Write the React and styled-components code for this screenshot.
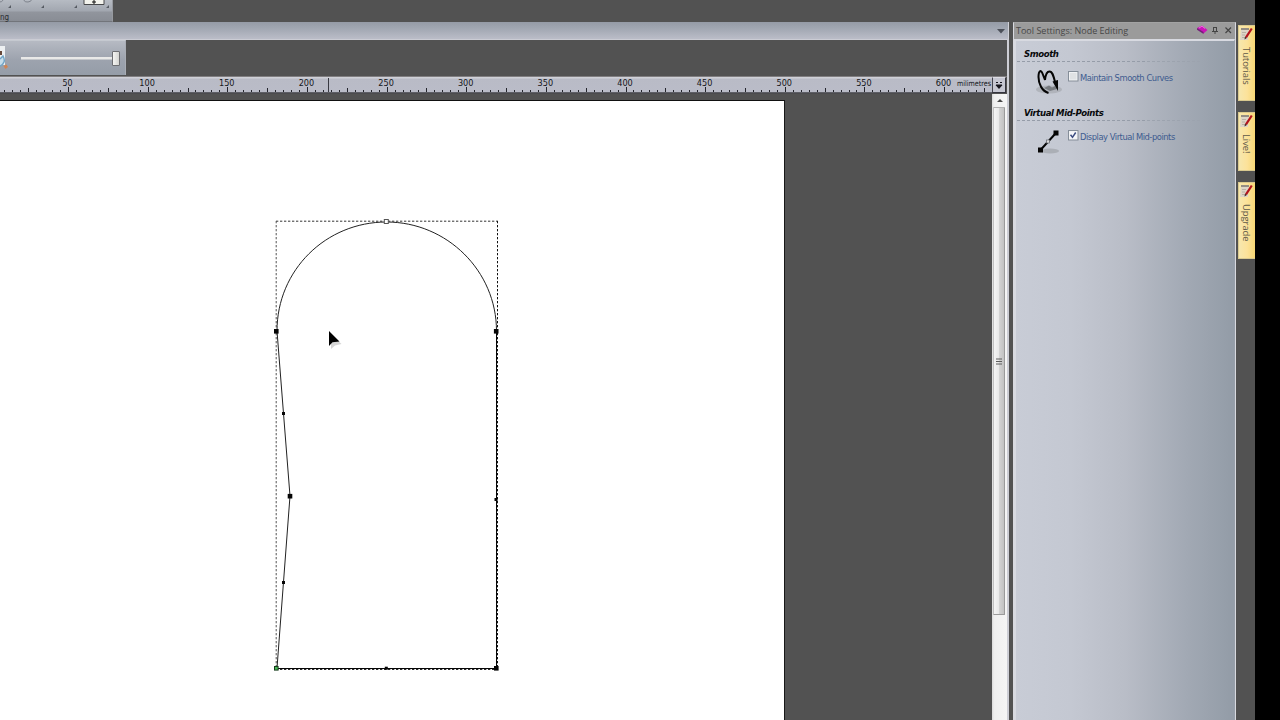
import React from 'react';
import styled, { createGlobalStyle } from 'styled-components';

const GlobalStyle = createGlobalStyle`
  *, *::before, *::after { box-sizing: border-box; }
  html, body { margin: 0; padding: 0; overflow: hidden; background: #000; }
  svg { display: block; flex-shrink: 0; }
`;

const ui = '"DejaVu Sans Condensed", "DejaVu Sans", sans-serif';

const Screen = styled.div`
  display: flex;
  width: 1280px;
  height: 720px;
  overflow: hidden;
  background: #000;
  font-family: ${ui};
`;

const Desktop = styled.div`
  display: flex;
  width: 1255px;
  background: #525252;
`;

const Workspace = styled.main`
  display: flex;
  flex-direction: column;
  width: 1009px;
`;

const RibbonGroup = styled.div`
  height: 22px;
  width: 113px;
  border-right: 1px solid #96999f;
  border-bottom: 1px solid #72757b;
  background: linear-gradient(#b6bbc3, #a2a7b0 11px, #91959d 12px, #898d95);
`;

const RibbonIcons = styled.svg`
  width: 112px;
  height: 12px;
`;

const RibbonCaption = styled.div`
  height: 9px;
  line-height: 11px;
  font-size: 8px;
  color: #292c31;
`;

const TabStrip = styled.div`
  display: flex;
  align-items: center;
  justify-content: flex-end;
  height: 18px;
  padding: 1px 3px 0 0;
  border-right: 1px solid #d0d1d8;
  border-bottom: 1px solid #cbccd4;
  background: linear-gradient(#959ba6, #a0a6b1 6px, #bbbdc8);
`;

const View = styled.div`
  display: flex;
  flex-direction: column;
  flex: 1;
  min-height: 0;
  border-right: 2px solid #cdced5;
`;

const SliderBar = styled.div`
  display: flex;
  align-items: center;
  width: 126px;
  height: 35px;
  border-top: 1px solid #c5c9d0;
  border-right: 1px solid #a9adb5;
  background: linear-gradient(#b6bac3, #9da3ae 55%, #959da8);
`;

const ClippedIcon = styled.svg`
  width: 8px;
  height: 26px;
`;

const SliderTrack = styled.div`
  width: 91px;
  height: 3px;
  margin: 1px 0 0 13px;
  background: #e9e9e8;
  border-bottom: 1px solid #c4c7cb;
`;

const SliderThumb = styled.div`
  width: 8px;
  height: 15px;
  border: 1px solid #6d6e72;
  border-radius: 1px;
  background: linear-gradient(90deg, #f5f5f3, #d5d5d2);
`;

const RulerRow = styled.div`
  display: flex;
  height: 18px;
  margin-top: 1px;
  border-top: 1px solid #807e80;
`;

const RulerScale = styled.svg`
  width: 992px;
  height: 17px;
  background: linear-gradient(#cfd0d7 0 1px, #b9bbc6 2px, #babcc8);
`;

const UnitButton = styled.div`
  display: flex;
  align-items: center;
  justify-content: center;
  width: 14px;
  height: 16px;
  border: 1px solid #34343e;
  border-top-color: #dcdce3;
  border-left-color: #44444e;
  background: #c5c6d1;
`;

const CanvasRow = styled.div`
  display: flex;
  flex: 1;
  min-height: 0;
`;

const Canvas = styled.div`
  width: 992px;
  padding-top: 6px;
  background: #525252;
`;

const Page = styled.div`
  width: 785px;
  height: 621px;
  border-top: 1px solid #111;
  border-right: 1px solid #181818;
  background: #fff;
`;

const Scrollbar = styled.div`
  display: flex;
  flex-direction: column;
  width: 15px;
  background: linear-gradient(90deg, #d9d9d9, #efefef 2px, #f5f5f5);
`;

const ScrollArrow = styled.div`
  display: flex;
  align-items: center;
  justify-content: center;
  height: 13px;
`;

const ScrollThumb = styled.div`
  display: flex;
  align-items: center;
  justify-content: center;
  width: 12px;
  height: 508px;
  margin-left: 1px;
  border: 1px solid #9a9a9a;
  border-top-color: #b0b0b0;
  border-left-color: #c0c0c0;
  border-radius: 1px;
  background: linear-gradient(90deg, #f4f4f4, #e9e9e9 45%, #d2d2d2 55%, #c2c2c2);
`;

const ToolPanel = styled.aside`
  display: flex;
  flex-direction: column;
  width: 223px;
  height: 698px;
  margin: 22px 0 0 4px;
  border: 1px solid #d8d9df;
  border-bottom: 0;
  border-top-color: #a3a3a3;
`;

const PanelTitle = styled.header`
  display: flex;
  align-items: center;
  justify-content: space-between;
  height: 16px;
  padding: 0 2px 2px 2px;
  background: #9b9b9b;
  font-family: "Open Sans", "Noto Sans", sans-serif;
  font-size: 9px;
  color: #474747;
  white-space: nowrap;
`;

const PanelBody = styled.div`
  flex: 1;
  border: 2px solid #d8dae1;
  border-width: 2px 1px 0 2px;
  border-right-color: #979fa9;
  padding: 5px 0 0 1px;
  background: linear-gradient(90deg, #c8ccd6, #c4c8d2 25%, #b9bdc7 50%, #a2a9b4 78%, #949da8 98%);
`;

const Section = styled.section`
  height: 59px;
`;

const SectionTitle = styled.h2`
  width: 184px;
  height: 15px;
  margin: 0;
  padding-left: 7px;
  font: italic bold 9.5px/15px ${ui};
  letter-spacing: -0.42px;
  color: #08090b;
  white-space: nowrap;
`;

const DividerLine = styled.svg`
  width: 184px;
  height: 1px;
`;

const OptionRow = styled.label`
  display: flex;
  padding: 5px 0 0 18px;
  font-size: 9.3px;
  line-height: 21px;
  letter-spacing: ${(p) => p.$tracking};
  color: #3d5b8f;
  white-space: nowrap;
`;

const OptionIcon = styled.svg`
  width: 33px;
  height: 32px;
`;

const Checkbox = styled.svg`
  width: 11px;
  height: 11px;
  margin: 4px 1px 0 0;
`;

const TabRail = styled.nav`
  display: flex;
  flex-direction: column;
  gap: 11px;
  width: 17px;
  margin: 25px 0 0 2px;
`;

const SideTab = styled.div`
  display: flex;
  flex-direction: column;
  align-items: flex-start;
  width: 17px;
  height: ${(p) => p.$length}px;
  padding: 1px 0 0 1px;
  border: 1px solid #d9c98f;
  border-right: 0;
  background: linear-gradient(90deg, #f6e7ae, #fce29a 50%, #f7d774);
`;

const SideTabLabel = styled.span`
  margin-top: 6px;
  writing-mode: vertical-rl;
  font-family: "Open Sans", "Noto Sans", sans-serif;
  font-size: 9.5px;
  line-height: 13px;
  letter-spacing: -0.1px;
  color: #5d5848;
`;

function Divider() {
  return (
    <DividerLine viewBox="0 0 184 1">
      <line x1="0" y1=".5" x2="130" y2=".5" stroke="#959ca8" strokeDasharray="3 2" />
      <line x1="130" y1=".5" x2="184" y2=".5" stroke="#9ca3ae" strokeDasharray="3 2" />
    </DividerLine>
  );
}

function Ruler() {
  const ticks = Array.from({ length: 126 }, (_, i) => ({
    x: Math.round(-11.6 + 7.964 * i),
    h: i % 10 === 0 ? 5 : i % 5 === 0 ? 4 : 2,
  }));
  const labels = Array.from({ length: 12 }, (_, i) => 50 * (i + 1));
  return (
    <RulerScale viewBox="0 0 992 17">
      {ticks.map((t) => (
        <rect key={t.x} x={t.x} y={15 - t.h} width="1" height={t.h} fill="#24252c" />
      ))}
      <rect y="15" width="992" height="1" fill="#5e5f66" />
      <rect y="16" width="992" height="1" fill="#4b4b4e" />
      <rect x="328" y="1" width="1" height="14" fill="#383941" />
      {labels.map((n) => (
        <text
          key={n}
          x={67.5 + (n / 50 - 1) * 79.64}
          y="9"
          textAnchor="middle"
          textLength={n < 100 ? 10 : 15.5}
          lengthAdjust="spacingAndGlyphs"
          fontSize="8.5"
          fill="#15161a"
        >
          {n}
        </text>
      ))}
      <text x="957" y="9" textLength="34" lengthAdjust="spacingAndGlyphs" fontSize="7.5" fill="#101116">
        milimetres
      </text>
    </RulerScale>
  );
}

function Node({ x, y, size = 4.6, fill = '#050505' }) {
  return <rect x={x - size / 2} y={y - size / 2} width={size} height={size} fill={fill} />;
}

function Drawing() {
  return (
    <svg width="784" height="619" viewBox="0 101 784 619">
      <g fill="none" strokeWidth="1" strokeDasharray="2.300 1.700">
        <path d="M276 221.200H498" stroke="#333" />
        <path d="M276.200 221V669" stroke="#555" />
        <path d="M497.500 221V669" stroke="#111" />
        <path d="M276 669.400H498" stroke="#111" />
      </g>
      <path d="M277 331C277 270 326 222 386.500 222S496.500 271 496.500 331" fill="none" stroke="#222" />
      <path d="M277 331L290 496L277 668" fill="none" stroke="#222" />
      <path d="M277 668.500H496.500V331" fill="none" stroke="#050505" />
      <rect x="384.300" y="219.500" width="4" height="4" fill="#fff" stroke="#555" />
      <Node x={276.3} y={331.3} />
      <Node x={496.2} y={331.3} />
      <Node x={290} y={496.2} />
      <Node x={283.5} y={413.5} size={3} />
      <Node x={283.5} y={582.5} size={3} />
      <Node x={496} y={499.5} size={3} />
      <Node x={386.3} y={668.2} size={3} />
      <Node x={496.3} y={668.3} />
      <Node x={276.3} y={668.3} fill="#173d1c" />
      <Node x={276.3} y={668.3} size={2.6} fill="#49b657" />
      <path d="M331 334V349L335 345.500L341.500 344Z" fill="#777" opacity=".3" />
      <path d="M329 331V346L332.500 342.200L339.500 341.400Z" fill="#000" />
    </svg>
  );
}

function CheckMark({ checked }) {
  return (
    <Checkbox viewBox="0 0 11 11">
      <rect x=".5" y=".5" width="9.500" height="9.500" fill="#f1f2f4" stroke="#858e99" />
      <rect x="2" y="2" width="6.500" height="6.500" fill={checked ? '#f6f7fa' : '#e0e2e4'} />
      {checked && <path d="M2.500 4.800L4.500 7.300L7.700 2.500" fill="none" stroke="#3c4d81" strokeWidth="1.500" />}
    </Checkbox>
  );
}

function PencilIcon() {
  return (
    <svg width="13" height="14" viewBox="0 0 13 14">
      <path d="M1 1.500H9L8 13H0Z" fill="#ddd5c7" />
      <path d="M1 1H9V3H1Z" fill="#948d83" />
      <path d="M2 5.500H6M2 8H5M2 10.500H6" stroke="#b9b1a6" />
      <path d="M11.800 1.500L6 10.300" stroke="#b4131d" strokeWidth="2.200" />
      <path d="M5 9.700L6.800 10.900L4.500 12.500Z" fill="#3b2420" />
    </svg>
  );
}

export default function App() {
  return (
    <>
      <GlobalStyle />
      <Screen>
        <Desktop>
          <Workspace>
            <RibbonGroup>
              <RibbonIcons viewBox="0 0 112 12">
                <path d="M-2 2Q2 3 4-1M23-1Q25 3 28 2Q31 2 32-1" fill="none" stroke="#7e838c" />
                <path d="M11 5V8H8ZM44 5V8H41ZM77 5V8H74ZM109 5V8H106Z" fill="#565b63" />
                <path d="M84-1V4.500H104V-1Z" fill="#f3f3ed" stroke="#48494b" />
                <path d="M94 0V4M92 2H96" stroke="#111" />
              </RibbonIcons>
              <RibbonCaption>ng</RibbonCaption>
            </RibbonGroup>
            <TabStrip>
              <svg width="8" height="5" viewBox="0 0 8 5"><path d="M0 0H8L4 4.500Z" fill="#4c5059" /></svg>
            </TabStrip>
            <View>
              <SliderBar>
                <ClippedIcon viewBox="0 0 8 26">
                  <path d="M0 1H5V20H0Z" fill="#edf0f2" />
                  <path d="M0 6H2V10H0Z" fill="#654738" />
                  <path d="M0 14L3 11Q5 15 4 17Q3 20 0 21" fill="#c5dcea" stroke="#71a5c7" strokeWidth="1.500" />
                  <path d="M3.500 21L6.500 19.500L8 22L5.500 24Z" fill="#d18452" />
                </ClippedIcon>
                <SliderTrack />
                <SliderThumb />
              </SliderBar>
              <RulerRow>
                <Ruler />
                <UnitButton>
                  <svg width="8" height="9" viewBox="0 0 8 9">
                    <path d="M1 1.500H3M5 1.500H7M1 4H7" stroke="#15151d" />
                    <path d="M.5 4H7.500L4 8Z" fill="#15151d" />
                  </svg>
                </UnitButton>
              </RulerRow>
              <CanvasRow>
                <Canvas>
                  <Page><Drawing /></Page>
                </Canvas>
                <Scrollbar>
                  <ScrollArrow>
                    <svg width="6" height="3" viewBox="0 0 6 3"><path d="M0 3H6L3 0Z" fill="#484848" /></svg>
                  </ScrollArrow>
                  <ScrollThumb>
                    <svg width="6" height="7" viewBox="0 0 6 7"><path d="M0 1H6M0 3.500H6M0 6H6" stroke="#5d5d5d" /></svg>
                  </ScrollThumb>
                </Scrollbar>
              </CanvasRow>
            </View>
          </Workspace>
          <ToolPanel>
            <PanelTitle>
              <span>Tool Settings: Node Editing</span>
              <svg width="36" height="12" viewBox="0 0 36 12">
                <path d="M0 4L5 1.500L10.500 6L6.500 9.500Z" fill="#c914b7" />
                <path d="M0 4L6.500 8L6.500 10L0 5.800Z" fill="#742079" />
                <path d="M2 4L5 2.200L8 4.500" fill="none" stroke="#ef67df" />
                <path d="M16.500 3V7.500M19.500 3V7.500M16 3.500H20M15 7.500H21M18 8V10" fill="none" stroke="#444" />
                <path d="M28.500 3.500L34 9M34 3.500L28.500 9" stroke="#444" strokeWidth="1.200" />
              </svg>
            </PanelTitle>
            <PanelBody>
              <Section>
                <SectionTitle>Smooth</SectionTitle>
                <Divider />
                <OptionRow $tracking="-0.45px">
                  <OptionIcon viewBox="0 0 33 32">
                    <ellipse cx="14" cy="22.500" rx="13" ry="4" fill="#a4a8ad" opacity=".65" />
                    <path d="M9 21L14 18.500L17 20.500L20 19L22 22L15 24Z" fill="#777b80" />
                    <path d="M13.500 26C7 24 3.500 17 3.500 10C3.500 3.500 6 2.500 7.500 6.500L10 13C10.500 8 12 4.500 14.500 4.500C17.500 4.500 18.500 9 20 15" fill="none" stroke="#050505" strokeWidth="2" />
                    <path d="M17.500 14.500L23 13L23 24Z" fill="#050505" />
                  </OptionIcon>
                  <CheckMark />
                  <span>Maintain Smooth Curves</span>
                </OptionRow>
              </Section>
              <Section>
                <SectionTitle>Virtual Mid-Points</SectionTitle>
                <Divider />
                <OptionRow $tracking="-0.47px">
                  <OptionIcon viewBox="0 0 33 32">
                    <ellipse cx="15" cy="25" rx="9" ry="2.500" fill="#a0a4aa" opacity=".7" />
                    <path d="M5.500 24L20.500 7.500" stroke="#050505" strokeWidth="2" />
                    <path d="M3 21.500H8V26.500H3ZM18.500 4.500H23.500V9.500H18.500Z" fill="#050505" />
                    <rect x="11.500" y="14" width="3" height="3" fill="#ddd" stroke="#65696f" strokeWidth=".7" />
                  </OptionIcon>
                  <CheckMark checked />
                  <span>Display Virtual Mid-points</span>
                </OptionRow>
              </Section>
            </PanelBody>
          </ToolPanel>
          <TabRail>
            <SideTab $length={76}><PencilIcon /><SideTabLabel>Tutorials</SideTabLabel></SideTab>
            <SideTab $length={59}><PencilIcon /><SideTabLabel>Live!</SideTabLabel></SideTab>
            <SideTab $length={77}><PencilIcon /><SideTabLabel>Upgrade</SideTabLabel></SideTab>
          </TabRail>
        </Desktop>
      </Screen>
    </>
  );
}
